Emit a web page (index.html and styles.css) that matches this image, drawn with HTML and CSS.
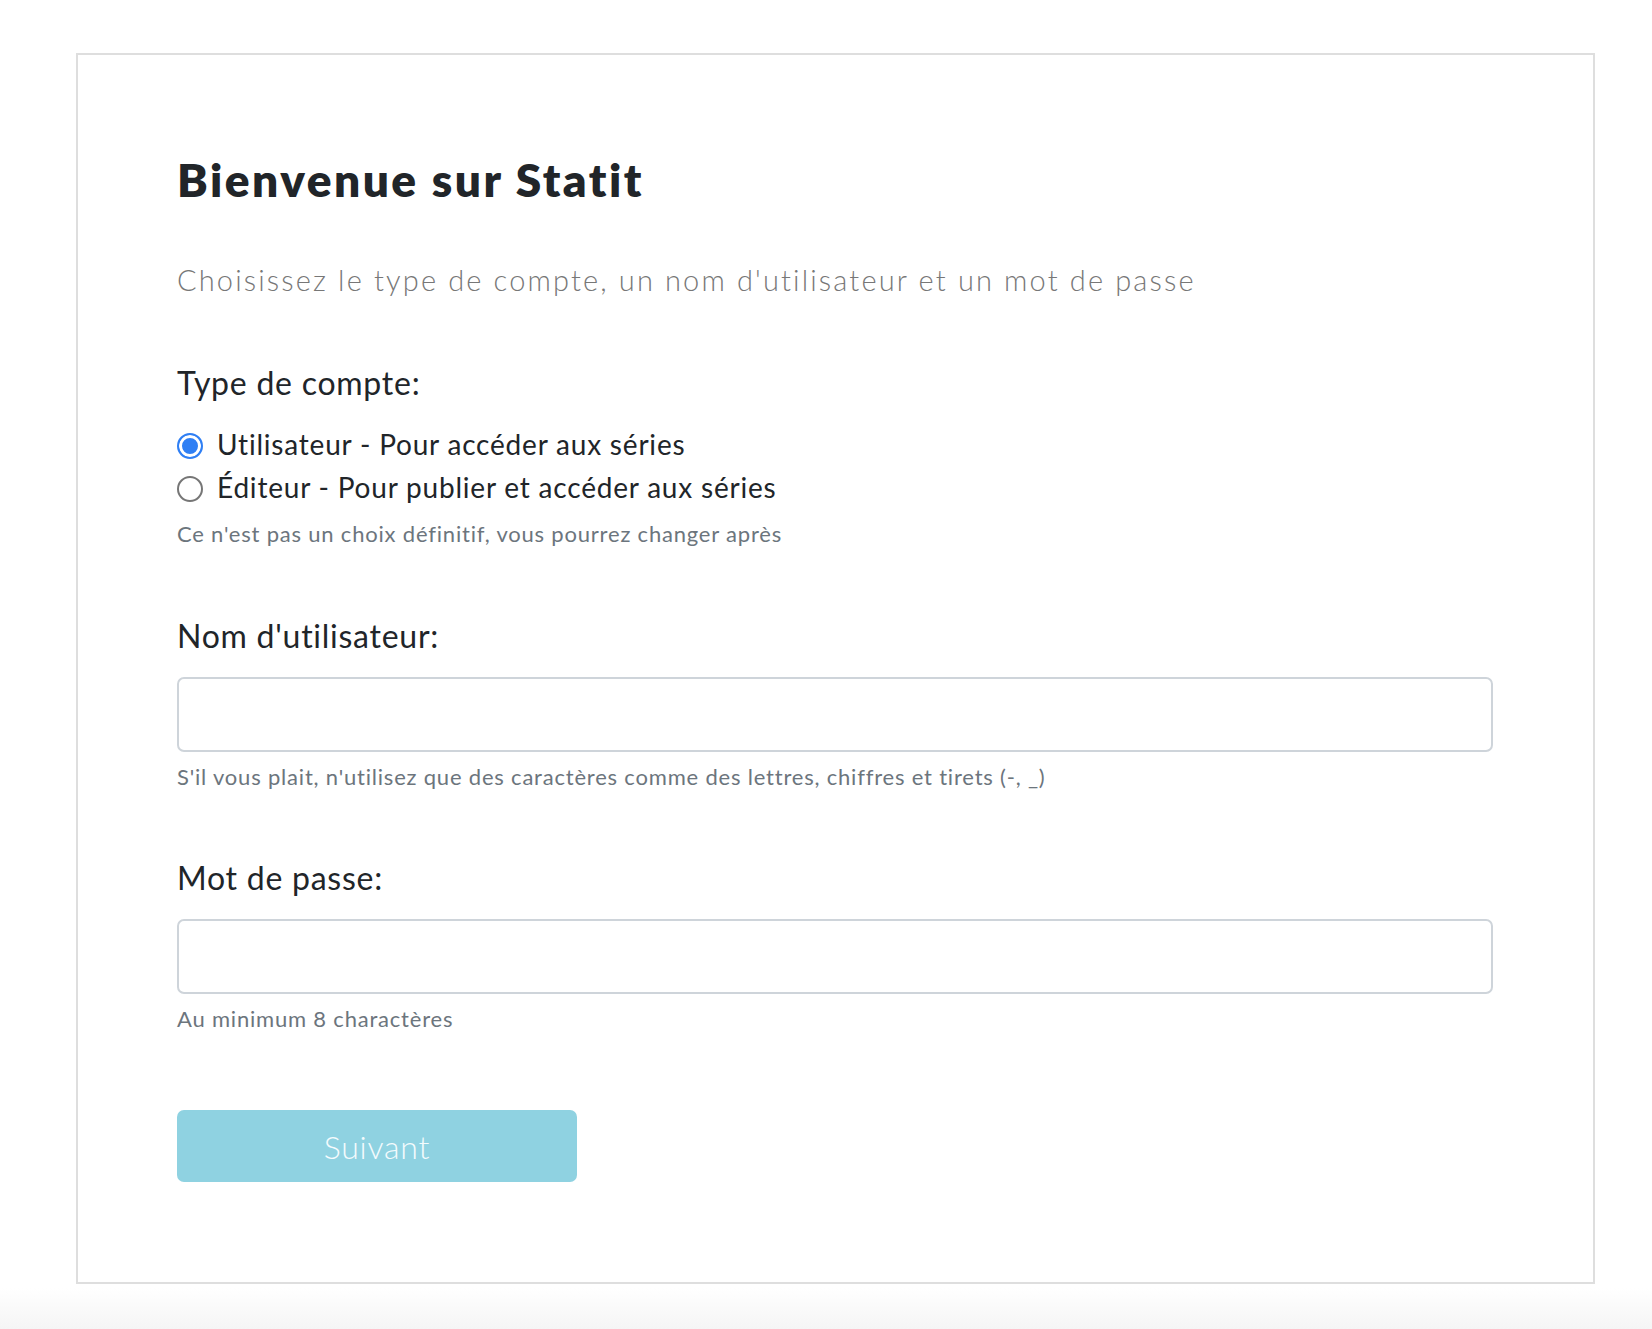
FILE: index.html
```html
<!DOCTYPE html>
<html lang="fr">
<head>
<meta charset="utf-8">
<title>Bienvenue sur Statit</title>
<link rel="stylesheet" href="styles.css">
</head>
<body>
<main class="card">
  <h1 class="title">Bienvenue sur Statit</h1>
  <p class="lead">Choisissez le type de compte, un nom d'utilisateur et un mot de passe</p>

  <section class="group group-radio">
    <div class="label">Type de compte:</div>
    <label class="radio-row"><input class="radio" type="radio" name="type" checked><span>Utilisateur - Pour accéder aux séries</span></label>
    <label class="radio-row"><input class="radio" type="radio" name="type"><span>Éditeur - Pour publier et accéder aux séries</span></label>
    <div class="help help-radio">Ce n'est pas un choix définitif, vous pourrez changer après</div>
  </section>

  <section class="group">
    <label class="label" for="username">Nom d'utilisateur:</label>
    <input class="field" id="username" type="text">
    <div class="help">S'il vous plait, n'utilisez que des caractères comme des lettres, chiffres et tirets (-, _)</div>
  </section>

  <section class="group group-pass">
    <label class="label" for="password">Mot de passe:</label>
    <input class="field" id="password" type="password">
    <div class="help">Au minimum 8 charactères</div>
  </section>

  <button class="btn" type="button">Suivant</button>
</main>
</body>
</html>
```

FILE: styles.css
```css
* { box-sizing: border-box; }

html, body {
  margin: 0;
  padding: 0;
}

body {
  min-height: 1329px;
  font-family: "Lato", "Noto Sans", sans-serif;
  color: #212529;
  background: linear-gradient(to bottom, #ffffff 0, #ffffff 1288px, #f5f5f5 1329px);
  padding-top: 53px;
  padding-left: 76px;
}

.card {
  width: 1519px;
  border: 2px solid #dedede;
  background: #ffffff;
  padding: 97px 100px 100px 99px;
  display: flex;
  flex-direction: column;
  align-items: flex-start;
}

.title {
  margin: 0;
  font-size: 46px;
  line-height: 55px;
  font-weight: 800;
  color: #212529;
  letter-spacing: 2.5px;
}

.lead {
  margin: 56px 0 0;
  font-size: 29px;
  line-height: 34px;
  font-weight: 300;
  color: #777777;
  letter-spacing: 2.15px;
}

.group {
  display: flex;
  flex-direction: column;
  align-self: stretch;
  margin-top: 70px;
}

.group-radio { margin-top: 67px; }

.group-pass { margin-top: 69px; }

.label {
  font-size: 32px;
  line-height: 38px;
  font-weight: 400;
  color: #212529;
  letter-spacing: 0.75px;
}

.group-radio .label { margin-bottom: 21px; }

.radio-row {
  display: flex;
  align-items: center;
  height: 43px;
  font-size: 28px;
  line-height: 43px;
  letter-spacing: 0.8px;
  color: #212529;
}

.radio {
  appearance: none;
  -webkit-appearance: none;
  width: 26px;
  height: 26px;
  margin: 2px 14px 0 0;
  border-radius: 50%;
  border: 2px solid #767676;
  background: #ffffff;
  flex: none;
}

.radio:checked {
  border-color: #2f7ff4;
  background: #2f7ff4;
  box-shadow: inset 0 0 0 3px #ffffff;
}

.field {
  margin-top: 22px;
  height: 75px;
  width: 100%;
  border: 2px solid #ced4da;
  border-radius: 7px;
  background: #ffffff;
  font: inherit;
  font-size: 28px;
  padding: 0 16px;
}

.help {
  margin-top: 12px;
  font-size: 22px;
  line-height: 26px;
  color: #6c757d;
  letter-spacing: 0.8px;
}

.help-radio { margin-top: 12px; }

.btn {
  margin-top: 78px;
  width: 400px;
  height: 72px;
  border: none;
  border-radius: 7px;
  background: #8fd2e1;
  color: #f4fbfd;
  font-family: inherit;
  font-size: 32px;
  font-weight: 300;
  letter-spacing: 0.8px;
  padding: 0;
}
```
